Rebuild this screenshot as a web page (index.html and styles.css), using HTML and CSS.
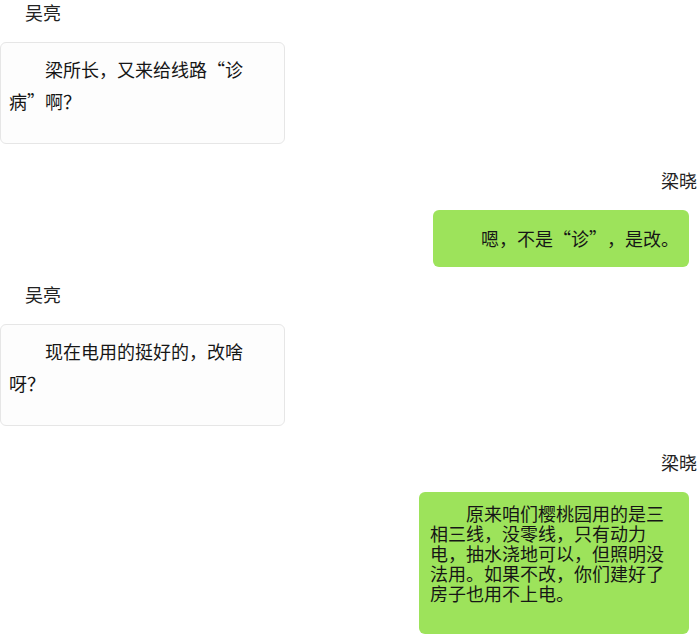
FILE: index.html
```html
<!DOCTYPE html>
<html lang="zh-CN">
<head>
    <meta charset="UTF-8">
    <meta name="viewport" content="width=device-width, initial-scale=1.0">
    <title>对话</title>
    <link rel="stylesheet" href="styles.css">
</head>
<body>

    <div class="chat">
        <!-- 吴亮 -->
        <div class="msg msg-left">
            <div class="name">吴亮</div>
            <div class="bubble bubble-left">梁所长，又来给线路“诊病”啊？</div>
        </div>

        <!-- 梁晓 -->
        <div class="msg msg-right msg-short">
            <div class="name">梁晓</div>
            <div class="bubble bubble-right bubble-one">嗯，不是“诊”，是改。</div>
        </div>

        <div class="msg msg-left">
            <div class="name">吴亮</div>
            <div class="bubble bubble-left">现在电用的挺好的，改啥呀？</div>
        </div>

        <div class="msg msg-right">
            <div class="name">梁晓</div>
            <div class="bubble bubble-right bubble-long">原来咱们樱桃园用的是三相三线，没零线，只有动力电，抽水浇地可以，但照明没法用。如果不改，你们建好了房子也用不上电。</div>
        </div>
    </div>

</body>
</html>
```

FILE: styles.css
```css
/* Página */
body {
    margin: 0;
    padding: 0;
    background-color: #ffffff;
    color: #161616;
    font-family: "Noto Sans CJK SC", "Noto Sans", sans-serif;
    font-size: 18px;
    text-spacing-trim: space-all;
}

.chat {
    display: flex;
    flex-direction: column;
}

/* Cada mensagem */
.msg {
    display: flex;
    flex-direction: column;
    margin-bottom: 24px;
}

.msg-short {
    margin-bottom: 15px;
}

.msg-left {
    align-items: flex-start;
}

.msg-right {
    align-items: flex-end;
}

.name {
    line-height: 24px;
    height: 24px;
    margin-bottom: 18px;
    color: #222222;
}

.msg-left .name {
    padding-left: 25px;
}

/* Balões */
.bubble {
    box-sizing: border-box;
    text-indent: 2em;
    border-radius: 6px;
}

.bubble-left {
    width: 285px;
    padding: 10px 25px 26px 8px;
    line-height: 32px;
    background-color: #fdfdfd;
    border: 1px solid #e6e6e6;
}

.bubble-right {
    margin-right: 8px;
    background-color: #9de35b;
}

.bubble-one {
    width: 256px;
    padding: 13px 6px 14px 12px;
    line-height: 30px;
}

.bubble-long {
    width: 270px;
    padding: 11px 14px 31px 11px;
    line-height: 20px;
}
```
